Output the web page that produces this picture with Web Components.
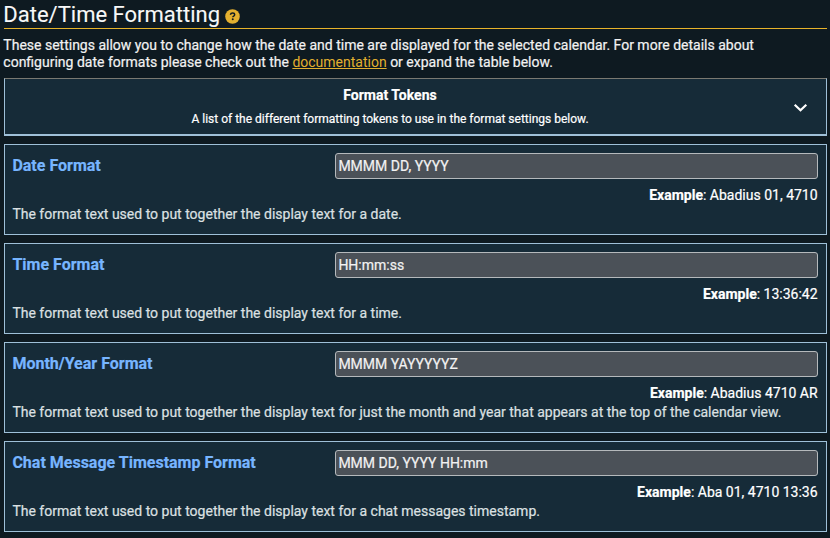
<!DOCTYPE html>
<html lang="en"><head><meta charset="utf-8"><title>Date/Time Formatting</title>
<style>
html{background:#0e1a21}
body{margin:0;font-family:Roboto,sans-serif;font-size:14px;color:#f2f2f2}
</style></head><body>
<settings-page>
<page-heading>Date/Time Formatting</page-heading>
<intro-text>These settings allow you to change how the date and time are displayed for the selected calendar. For more details about<br>configuring date formats please check out the <a href="#">documentation</a> or expand the table below.</intro-text>
<token-accordion><span slot="title">Format Tokens</span><span slot="note">A list of the different formatting tokens to use in the format settings below.</span></token-accordion>
<format-setting label="Date Format" value="MMMM DD, YYYY" example="Abadius 01, 4710">The format text used to put together the display text for a date.</format-setting>
<format-setting label="Time Format" value="HH:mm:ss" example="13:36:42">The format text used to put together the display text for a time.</format-setting>
<format-setting label="Month/Year Format" value="MMMM YAYYYYYZ" example="Abadius 4710 AR">The format text used to put together the display text for just the month and year that appears at the top of the calendar view.</format-setting>
<format-setting label="Chat Message Timestamp Format" value="MMM DD, YYYY HH:mm" example="Aba 01, 4710 13:36">The format text used to put together the display text for a chat messages timestamp.</format-setting>
</settings-page>
<script>
const define = (name, html, setup) => customElements.define(name, class extends HTMLElement {
  constructor() {
    super();
    this.attachShadow({mode: 'open'}).innerHTML = html;
  }
  connectedCallback() { if (setup) setup(this, this.shadowRoot); }
});
define('settings-page', `<style>
:host{display:flex;flex-direction:column;box-sizing:border-box;width:830px;height:538px;padding:0 3px 0 4px;overflow:hidden;-webkit-text-stroke:.2px}
::slotted(*){flex:none}
</style><slot></slot>`);
define('page-heading', `<style>
:host{display:flex;align-items:flex-start;box-sizing:border-box;height:29px;border-bottom:1px solid #e7b32a;font-size:22px;line-height:28px;color:#f8f8f8;white-space:nowrap;-webkit-text-stroke:.1px}
span{margin:1px 0 0 -.7px}
svg{display:block;margin:9px 0 0 5px}
</style><span><slot></slot></span>
<svg width="15" height="15" viewBox="0 0 512 512"><circle cx="256" cy="256" r="248" fill="#e3b02f"/><path d="M184 196c8-38 36-60 76-60 40 0 70 24 70 60 0 48-62 48-62 88" fill="none" stroke="#0e1a21" stroke-width="50"/><circle cx="264" cy="352" r="34" fill="#0e1a21"/></svg>`);
define('intro-text', `<style>
:host{display:block;height:49px;box-sizing:border-box;padding-top:8px;margin-left:-.7px;line-height:17px;white-space:nowrap}
::slotted(a){color:#e3b02f;-webkit-text-stroke:0}
</style><slot></slot>`);
define('token-accordion', `<style>
:host{display:flex;flex-direction:column;position:relative;align-items:center;box-sizing:border-box;height:58px;margin-bottom:8px;padding:8px 51px 0 0;background:#162b38;border:1px solid #9fc0d8;border-top-color:#7a7971;border-bottom-width:2px;color:#fff;white-space:nowrap}
.t{font-weight:700;line-height:17px}
.n{font-size:12px;line-height:15px;margin-top:8px}
svg{position:absolute;right:18px;top:23px}
</style><div class="t"><slot name="title"></slot></div><div class="n"><slot name="note"></slot></div>
<svg width="15" height="11" viewBox="0 0 15 11"><path d="M1.700 2.700 7.500 8.300l5.800-5.600" fill="none" stroke="#fff" stroke-width="2.200"/></svg>`);
define('format-setting', `<style>
:host{display:block;box-sizing:border-box;flex:none;height:91px;margin-bottom:8px;padding:8px 8px 0 7.400px;background:#162b38;border:1px solid #9fc0d8;white-space:nowrap}
.row{display:grid;grid-template-columns:322.600px 483px;height:26px}
.label{font-size:16px;font-weight:700;line-height:26px;color:#77b5ff}
.value{box-sizing:border-box;height:26px;border:1px solid #b5b9bc;border-radius:3px;background:#4b5158;padding:0 2.400px;line-height:24px}
.ex{text-align:right;line-height:17px;margin:8px .4px 0 0;color:#fff}
.desc{line-height:17px;margin-top:2px;color:#dce0e2}
</style><div class="row"><div class="label"></div><div class="value"></div></div>
<div class="ex"><b>Example</b>: <span></span></div><div class="desc"><slot></slot></div>`, (el, root) => {
  root.querySelector('.label').textContent = el.getAttribute('label');
  root.querySelector('.value').textContent = el.getAttribute('value');
  root.querySelector('.ex span').textContent = el.getAttribute('example');
});
</script></body></html>
